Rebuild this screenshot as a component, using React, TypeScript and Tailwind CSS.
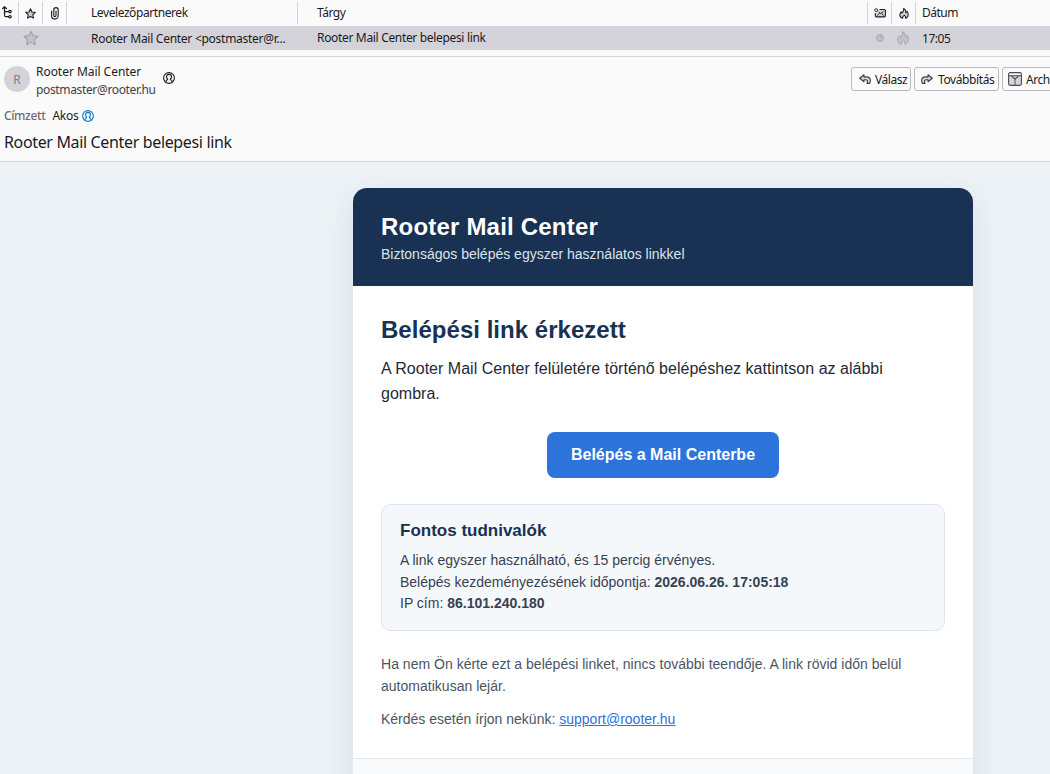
import React from "react";

type IconProps = { className?: string };

const ThreadIcon = () => (
  <svg width="12" height="14" viewBox="0 0 12 14" fill="none" stroke="#1a1a1e" strokeWidth="1.2" strokeLinecap="round">
    <path d="M.6 2.5 2.5.8 4.4 2.5M2.5 1v8.2c0 1 .5 1.5 1.5 1.5H6.5M2.5 5.6H6.5" />
    <circle cx="8" cy="5.6" r="1.2" />
    <circle cx="8" cy="10.7" r="1.2" />
  </svg>
);

const StarIcon = ({ className }: IconProps) => (
  <svg className={className} viewBox="0 0 16 16" strokeLinejoin="round">
    <path d="M8 1.2 10.1 5.7 15 6.3 11.4 9.7 12.3 14.7 8 12.3 3.7 14.7 4.6 9.7 1 6.3 5.9 5.7Z" />
  </svg>
);

const ClipIcon = () => (
  <svg width="8" height="13" viewBox="0 0 8 13" fill="none" stroke="#1a1a1e" strokeWidth="1.1" strokeLinecap="round">
    <path d="M.6 4v4.8a3.3 3.3 0 0 0 6.6 0V2.8a2.2 2.2 0 0 0-4.4 0v5.7a1.1 1.1 0 0 0 2.2 0V4" />
  </svg>
);

const ReadIcon = () => (
  <svg width="12" height="11" viewBox="0 0 12 11" fill="none" stroke="#1a1a1e" strokeWidth="1.1" strokeLinecap="round" strokeLinejoin="round">
    <path d="M6 1.5h4.2c.7 0 1.2.5 1.2 1.2v5c0 .7-.5 1.2-1.2 1.2H2.6c-.7 0-1.2-.5-1.2-1.2V5.5" fill="#d5d5d9" />
    <path d="m3.500 7.300 2-1.900M9.500 7.300l-2-1.900M5.200 4.300l1.500 1.300 2.500-2" strokeWidth=".9" />
    <circle cx="2.2" cy="2.2" r="1.5" strokeWidth=".9" />
  </svg>
);

const FlameIcon = ({ className }: IconProps) => (
  <svg className={className} viewBox="0 0 12 14" strokeLinejoin="round">
    <path d="M4.300 13.200C1.900 12.500.7 10.800.7 8.800c0-1.700.8-2.800 1.700-4l.9 1.900C4.900 5 6 3.100 5.500.7 7.900 1.900 8.700 4 8.300 6.200l1.600-2c1 1.300 1.500 2.800 1.400 4.500-.1 2.400-1.500 3.900-3.500 4.500.7-1.600.3-2.800-1.400-4.100-1.700 1.300-2.600 2.500-2.100 4.100Z" />
  </svg>
);

const PersonIcon = ({ className }: IconProps) => (
  <svg className={className} viewBox="0 0 12 12" fill="none" stroke="currentColor" strokeWidth="1.1" strokeLinejoin="round">
    <circle cx="6" cy="6" r="5.4" />
    <path d="M3 10.300V9c0-.7.600-1 1.600-1.300V7C3.700 6.300 3.500 5.500 3.500 4.700 3.500 3.200 4.500 2.400 6 2.400s2.500.8 2.500 2.300c0 .8-.2 1.600-1.100 2.300v.7C8.400 8 9 8.300 9 9v1.300" />
  </svg>
);

const ReplyIcon = ({ className }: IconProps) => (
  <svg className={className} width="12" height="11" viewBox="0 0 12 11" fill="#d5d5d9" stroke="#3b3b42" strokeWidth="1.1" strokeLinejoin="round">
    <path d="M5 .8.7 4.200 5 7.700V5.800h1.500c1.500 0 2 .7 2 1.900 0 .8-.3 1.300-.6 1.700h2.600c.6-.8.9-1.700.9-2.700C11.400 4.200 9.800 2.900 7.200 2.900H5Z" />
  </svg>
);

const ArchiveIcon = () => (
  <svg className="shrink-0" width="14" height="14" viewBox="0 0 14 14" fill="none" stroke="#4a4a52" strokeWidth="1.1" strokeLinejoin="round">
    <path d="M.6 3.800v8c0 .9.700 1.600 1.600 1.600h9.600c.9 0 1.600-.7 1.600-1.600v-8" fill="#d5d5d9" />
    <path d="M.6 3.800h12.800M.6 4V2.200C.6 1.300 1.300.6 2.200.6h9.600c.9 0 1.600.7 1.600 1.600V4" />
    <path d="m3.500 4 3.500 3.200L10.500 4" />
    <path d="M7 7.500v6" strokeDasharray="1 1" strokeWidth="1.800" />
  </svg>
);

const HeaderCell = ({ className, children }: { className: string; children?: React.ReactNode }) => (
  <div className={`flex h-[22px] shrink-0 items-center border-r border-[#d4d4d8] ${className}`}>{children}</div>
);

const ToolButton = ({ className, children }: { className: string; children: React.ReactNode }) => (
  <button className={`flex h-6 shrink-0 items-center rounded-[3px] border border-[#b9b9bf] whitespace-nowrap text-[#1a1a1e] ${className}`}>
    {children}
  </button>
);

function MessageList() {
  return (
    <div className="border-b border-[#d4d4d8] text-[12px] text-[#1a1a1e]">
      <div className="flex h-[26px] items-center">
        <HeaderCell className="w-[19px] pl-[2px]"><ThreadIcon /></HeaderCell>
        <HeaderCell className="w-6 justify-center"><StarIcon className="size-[11px] fill-[#c9c9ce] stroke-[#1a1a1e] stroke-[1.5]" /></HeaderCell>
        <HeaderCell className="w-6 justify-center"><ClipIcon /></HeaderCell>
        <HeaderCell className="w-[231px] pl-6 tracking-[-0.42px]">Levelezőpartnerek</HeaderCell>
        <HeaderCell className="w-[570px] pl-[19px] tracking-[-0.5px]">Tárgy</HeaderCell>
        <HeaderCell className="w-6 justify-center"><ReadIcon /></HeaderCell>
        <HeaderCell className="w-6 justify-center"><FlameIcon className="h-[11px] w-[10px] fill-[#d5d5d9] stroke-[#1a1a1e] stroke-[1.3]" /></HeaderCell>
        <span className="pl-[6px] tracking-[-0.5px]">Dátum</span>
      </div>
      <div className="flex h-6 items-center bg-[#d4d3d9]">
        <div className="flex w-[91px] shrink-0 pl-[23px]"><StarIcon className="size-4 fill-[#c4c3c9] stroke-[#a5a4aa] stroke-[1.2]" /></div>
        <span className="w-[226px] shrink-0 pt-px tracking-[-0.27px]">Rooter Mail Center &lt;postmaster@r...</span>
        <span className="w-[551px] shrink-0 tracking-[-0.33px]">Rooter Mail Center belepesi link</span>
        <div className="flex w-6 shrink-0 justify-center">
          <svg width="8" height="8" viewBox="0 0 8 8" fill="#c4c3c9" stroke="#a5a4aa"><circle cx="4" cy="4" r="3.4" /><path d="M4 2.300A1.700 1.700 0 0 1 5.700 4" fill="none" /></svg>
        </div>
        <div className="flex w-[30px] shrink-0 pl-[5px]"><FlameIcon className="h-[14px] w-3 fill-[#c4c3c9] stroke-[#a5a4aa]" /></div>
        <span className="pt-px tracking-[-0.45px]">17:05</span>
      </div>
      <div className="h-[6px]" />
    </div>
  );
}

function MessageHeader() {
  return (
    <div className="h-[105px] overflow-hidden border-b border-[#d4d4d8] text-[12px] text-[#1a1a1e]">
      <div className="flex pt-[5px] pl-1">
        <div className="mt-[4px] flex size-[26px] shrink-0 items-center justify-center rounded-full bg-[#d4d3d9] pt-px text-[12px] text-[#8a7a78]">R</div>
        <div className="ml-[6px] w-[127px] shrink-0 pt-px leading-[18px] whitespace-nowrap">
          <div className="tracking-[-0.04px]">Rooter Mail Center</div>
          <div className="tracking-[-0.35px] text-[#3f3f46]">postmaster@rooter.hu</div>
        </div>
        <PersonIcon className="mt-[10px] size-3 shrink-0" />
        <div className="mt-[5px] ml-[676px] flex shrink-0 gap-[3px]">
          <ToolButton className="w-[60px] pt-px pl-[7px] tracking-[-0.45px]"><ReplyIcon className="mr-1" />Válasz</ToolButton>
          <ToolButton className="w-[85px] pt-px pl-[6px] tracking-[-0.4px]"><ReplyIcon className="mr-[5px] -scale-x-100" />Továbbítás</ToolButton>
          <ToolButton className="w-[86px] gap-1 pl-[5px] tracking-[-0.45px]"><ArchiveIcon /><span className="pt-px">Arch</span></ToolButton>
        </div>
      </div>
      <div className="mt-[8px] flex items-center pl-1 leading-[18px]">
        <span className="w-[48.5px] font-medium tracking-[-0.38px] text-[#6b6b73]">Címzett</span>
        <span className="tracking-[-0.3px]">Akos</span>
        <PersonIcon className="ml-[3.5px] size-3 text-[#0a78c8]" />
      </div>
      <h1 className="mt-[6px] pl-1 text-[16px] leading-[22px] tracking-[-0.35px]">Rooter Mail Center belepesi link</h1>
    </div>
  );
}

function Email() {
  return (
    <div className="flex-1 overflow-hidden bg-[#edf2f7] pt-[26px] font-['Liberation_Sans',Arial,sans-serif]">
      <div className="ml-[353px] w-[620px] overflow-hidden rounded-t-[14px] bg-white shadow-[0_8px_30px_rgba(26,48,100,0.10)]">
        <div className="h-[98px] bg-[#193153] px-7 pt-[25px] text-white">
          <div className="text-[24px] leading-7 font-bold tracking-[0.2px]">Rooter Mail Center</div>
          <div className="mt-[5px] text-[14px] leading-4 text-[#dce3ed]">Biztonságos belépés egyszer használatos linkkel</div>
        </div>
        <div className="px-7 pt-[29px] pb-7">
          <h2 className="text-[24px] leading-[30px] font-bold tracking-[0.03px] text-[#193153]">Belépési link érkezett</h2>
          <p className="mt-[11px] text-[16px] leading-[25px] tracking-[0.015px] text-[#1f2937]">
            A Rooter Mail Center felületére történő belépéshez kattintson az alábbi<br />
            gombra.
          </p>
          <a className="mt-[26px] ml-[166px] flex h-[46px] w-[232px] items-center justify-center rounded-lg bg-[#2c73da] text-[16px] font-bold text-white">
            Belépés a Mail Centerbe
          </a>
          <div className="mt-[26px] h-[127px] rounded-[10px] border border-[#dbe4ef] bg-[#f5f8fb] px-[18px] pt-4">
            <h3 className="text-[17px] leading-5 font-bold text-[#193153]">Fontos tudnivalók</h3>
            <div className="mt-[9px] text-[14px] leading-[21.7px] text-[#374151]">
              <p className="tracking-[0.015px]">A link egyszer használható, és 15 percig érvényes.</p>
              <p>Belépés kezdeményezésének időpontja: <b>2026.06.26. 17:05:18</b></p>
              <p>IP cím: <b>86.101.240.180</b></p>
            </div>
          </div>
          <div className="mt-[22px] text-[14px] leading-[22px] text-[#4b5563]">
            <p className="tracking-[0.015px]">Ha nem Ön kérte ezt a belépési linket, nincs további teendője. A link rövid időn belül automatikusan lejár.</p>
            <p className="mt-[11px]">Kérdés esetén írjon nekünk: <a className="text-[#2c73da] underline">support@rooter.hu</a></p>
          </div>
        </div>
        <div className="h-12 border-t border-[#e2e8f0] bg-[#f9fafc]" />
      </div>
    </div>
  );
}

export default function App() {
  return (
    <div className="flex h-[774px] w-[1050px] flex-col overflow-hidden bg-[#fafafa] font-['Noto_Sans','Open_Sans',sans-serif]">
      <MessageList />
      <MessageHeader />
      <Email />
    </div>
  );
}
